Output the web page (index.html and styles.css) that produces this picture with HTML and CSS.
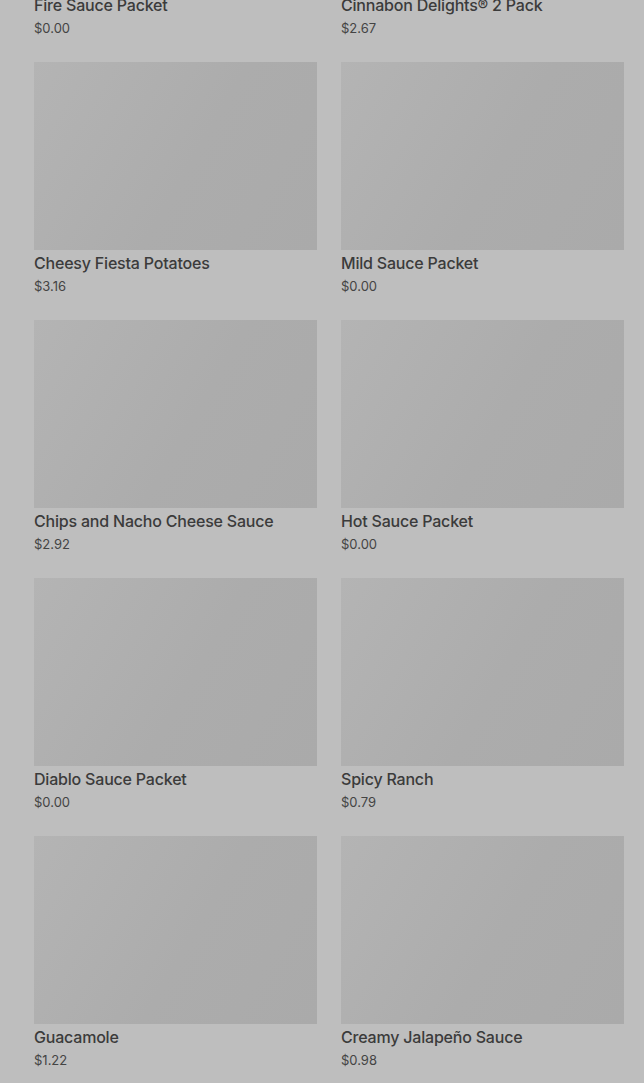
FILE: index.html
```html
<!DOCTYPE html>
<html lang="en">
<head>
  <meta charset="UTF-8">
  <title>Menu</title>
  <meta name="viewport" content="width=device-width, initial-scale=1.0">
  <link rel="stylesheet" href="styles.css">
</head>
<body>
  <main class="menu-grid">
    <div class="item">
      <div class="item-img"></div>
      <h3 class="item-name">Fire Sauce Packet</h3>
      <p class="item-price">$0.00</p>
    </div>
    <div class="item">
      <div class="item-img"></div>
      <h3 class="item-name">Cinnabon Delights® 2 Pack</h3>
      <p class="item-price">$2.67</p>
    </div>
    <div class="item">
      <div class="item-img"></div>
      <h3 class="item-name">Cheesy Fiesta Potatoes</h3>
      <p class="item-price">$3.16</p>
    </div>
    <div class="item">
      <div class="item-img"></div>
      <h3 class="item-name">Mild Sauce Packet</h3>
      <p class="item-price">$0.00</p>
    </div>
    <div class="item">
      <div class="item-img"></div>
      <h3 class="item-name">Chips and Nacho Cheese Sauce</h3>
      <p class="item-price">$2.92</p>
    </div>
    <div class="item">
      <div class="item-img"></div>
      <h3 class="item-name">Hot Sauce Packet</h3>
      <p class="item-price">$0.00</p>
    </div>
    <div class="item">
      <div class="item-img"></div>
      <h3 class="item-name">Diablo Sauce Packet</h3>
      <p class="item-price">$0.00</p>
    </div>
    <div class="item">
      <div class="item-img"></div>
      <h3 class="item-name">Spicy Ranch</h3>
      <p class="item-price">$0.79</p>
    </div>
    <div class="item">
      <div class="item-img"></div>
      <h3 class="item-name">Guacamole</h3>
      <p class="item-price">$1.22</p>
    </div>
    <div class="item">
      <div class="item-img"></div>
      <h3 class="item-name">Creamy Jalapeño Sauce</h3>
      <p class="item-price">$0.98</p>
    </div>
  </main>
</body>
</html>
```

FILE: styles.css
```css
*,
*::before,
*::after {
  box-sizing: border-box;
}
html, body {
  height: 100%;
  overflow: hidden;
}
body {
  margin: 0;
  background: #bebebe;
  font-family: Inter, Roboto, 'Liberation Sans', sans-serif;
  color: #3b3b3b;
}
.menu-grid {
  display: grid;
  grid-template-columns: 283px 283px;
  column-gap: 24px;
  row-gap: 25px;
  padding: 0 20px 0 34px;
  margin-top: -196px;
}
.item-img {
  height: 188px;
  background: linear-gradient(120deg, #b4b4b4 0%, #acacac 55%, #aaaaaa 100%);
}
.item-name {
  margin: 3px 0 0;
  font-size: 16px;
  line-height: 20px;
  font-weight: 500;
  letter-spacing: -0.2px;
}
.item-price {
  margin: 4px 0 0;
  font-size: 13px;
  line-height: 18px;
  font-weight: 400;
  color: #444;
}
```
